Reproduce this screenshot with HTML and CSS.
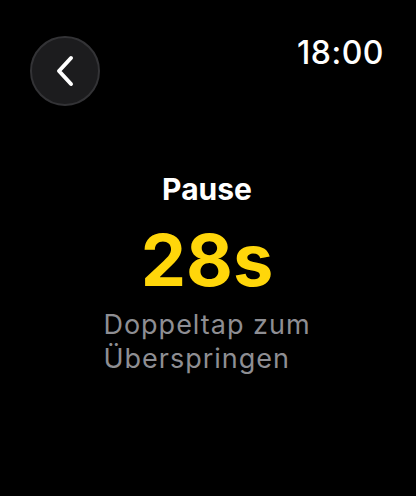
FILE: index.html
```html
<!DOCTYPE html>
<html lang="de">
<head>
    <meta charset="UTF-8">
    <meta name="viewport" content="width=device-width, initial-scale=1.0">
    <title>Pause</title>
    <link rel="stylesheet" href="styles.css">
</head>
<body>
    <div class="screen">
        <div class="topbar">
            <button class="back" aria-label="Zurück">
                <svg width="22" height="32" viewBox="0 0 22 32">
                    <path d="M17 3 L5 16 L17 29" fill="none" stroke="#fff" stroke-width="4" stroke-linecap="round" stroke-linejoin="round"/>
                </svg>
            </button>
            <div class="time">18:00</div>
        </div>

        <div class="content">
            <div class="label">Pause</div>
            <div class="count">28s</div>
            <div class="hint">Doppeltap zum<br>Überspringen</div>
        </div>
    </div>
</body>
</html>
```

FILE: styles.css
```css
body {
    margin: 0;
    padding: 0;
    background-color: #000;
    color: #fff;
    font-family: Inter, "Noto Sans", sans-serif;
}
.screen {
    width: 416px;
    height: 496px;
    box-sizing: border-box;
    padding: 36px 32px 0 30px;
}
.topbar {
    display: flex;
    justify-content: space-between;
    align-items: flex-start;
}
.back {
    width: 70px;
    height: 70px;
    border-radius: 50%;
    background-color: #1c1c1e;
    border: 2px solid #333336;
    display: flex;
    align-items: center;
    justify-content: center;
    padding: 0;
    cursor: pointer;
}
.time {
    font-size: 32px;
    font-weight: 500;
    letter-spacing: 0.5px;
    margin-top: -3px;
}
.content {
    display: flex;
    flex-direction: column;
    align-items: center;
    margin-top: 65px;
}
.label {
    font-size: 30px;
    font-weight: 700;
}
.count {
    font-size: 72px;
    font-weight: 700;
    color: #ffd60a;
    line-height: 1.1;
    margin-top: 13px;
}
.hint {
    font-size: 27px;
    color: #8e8e93;
    line-height: 34px;
    letter-spacing: 1px;
    margin-top: 9px;
}
```
